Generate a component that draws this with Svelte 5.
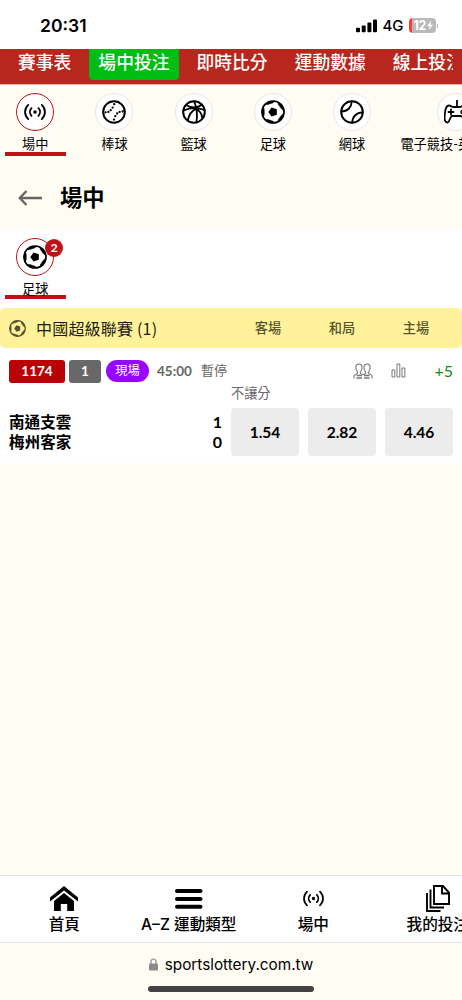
<script lang="ts">
  const navItems = ['賽事表', '場中投注', '即時比分', '運動數據', '線上投注'];

  const sports = [
    { icon: 'live', label: '場中' },
    { icon: 'baseball', label: '棒球' },
    { icon: 'basketball', label: '籃球' },
    { icon: 'soccer', label: '足球' },
    { icon: 'tennis', label: '網球' },
    { icon: 'esports', label: '電子競技-英雄聯盟' },
  ];

  const teams = [
    { name: '南通支雲', score: 1 },
    { name: '梅州客家', score: 0 },
  ];

  const columns = ['客場', '和局', '主場'];
  const odds = ['1.54', '2.82', '4.46'];

  const tabs = [
    { icon: 'home', label: '首頁' },
    { icon: 'menu', label: 'A–Z 運動類型' },
    { icon: 'live', label: '場中' },
    { icon: 'docs', label: '我的投注' },
  ];

  // baseball seams
  const stitches = [
    [3.6, 12.3], [6.4, 11.9], [8.7, 10.2], [10.6, 7.6], [12.2, 4.2],
    [20.6, 11.5], [17.6, 11.9], [15.2, 13.5], [13.3, 16.2], [12, 19.6],
  ];
</script>

{#snippet sportIcon(name: string)}
  <svg class="sport-svg" viewBox="0 0 24 24" fill="none" stroke="currentColor" stroke-width="2" stroke-linecap="round">
    {#if name === 'live'}
      <circle cx="12" cy="12" r="1.9" fill="currentColor" stroke="none"/>
      <path d="M8.2 7.8a6.2 6.2 0 0 0 0 8.4M15.8 7.8a6.2 6.2 0 0 1 0 8.4M4.6 4.200c-4.600 4.400-4.600 11.200 0 15.600M19.400 4.200c4.600 4.400 4.600 11.200 0 15.600" stroke-width="2"/>
    {:else if name === 'baseball'}
      <circle cx="12" cy="12" r="10.8"/>
      {#each stitches as [x, y]}
        <circle cx={x} cy={y} r="1.15" fill="currentColor" stroke="none"/>
      {/each}
    {:else if name === 'basketball'}
      <circle cx="12" cy="12" r="10.8"/>
      <path d="M12 1.2c2.7 6 3.7 13.5 2.4 21.2M1.5 10.5C8 7.8 15 7.3 22.5 10M4 5c5 3 11.5 3.5 16-.5M5.8 20.5C7 14 10 10.5 14 8.8M14 8.8c4 2.2 6 5.5 6.3 9.2" stroke-width="1.8"/>
    {:else if name === 'soccer'}
      <circle cx="12" cy="12" r="11" stroke-width="1.7"/>
      <path d="M7.300 12l3.300-4.500 5.200 1.700v5.600l-5.200 1.700z" fill="currentColor" stroke="none"/>
      {#each [0, 72, 144, 216, 288] as angle}
        <path d="M2.2 7.2l1 2v5.600l-1 2Q0 12 2.200 7.200z" transform="rotate({angle} 12 12)" fill="currentColor" stroke-width=".6"/>
      {/each}
    {:else if name === 'tennis'}
      <circle cx="12" cy="12" r="10.8"/>
      <path d="M1.5 11.5C7.5 11.5 11.5 7.5 11.8 1.5M12.2 22.5C12.5 16.5 16.5 12.500 22.500 12.500" stroke-width="1.8"/>
    {:else}
      <path d="M13 5.500V.5M5 5.500c2 0 2.500 1.500 4.500 1.500h6c2 0 2.500-1.500 4.500-1.500 2.500 0 3.500 2.500 4 7 .7 6 1 9.500-1.200 10-2.500.6-3.300-5.500-5.800-6.500H8c-2.500 1-2.300 7.100-4.800 6.500C0 22 .3 18.500 1 12.500c.5-4.500 1.500-7 4-7zM4.500 12h5M7 9.500v5" stroke-width="1.8"/>
      <circle cx="18.5" cy="12" r="1.6" stroke-width="1.4"/>
    {/if}
  </svg>
{/snippet}

<div class="screen">
  <header class="status">
    <span class="clock">20:31</span>
    <div class="status-right">
      <svg width="22" height="14" viewBox="0 0 22 14">
        <rect x="0" y="8.7" width="4" height="4.5" rx="1"/>
        <rect x="5.7" y="6.5" width="4" height="6.7" rx="1"/>
        <rect x="11.4" y="3.5" width="4" height="9.7" rx="1"/>
        <rect x="17" y="0.5" width="4" height="12.7" rx="1"/>
      </svg>
      <span class="network">4G</span>
      <span class="battery">
        12<svg width="6" height="11" viewBox="0 0 7 11"><path d="M5 0L0 6.2h3L2 11l5-6.4H4z" fill="#fff"/></svg>
      </span>
      <span class="battery-tip"></span>
    </div>
  </header>

  <nav class="topnav">
    <div class="topnav-list">
      {#each navItems as item, i}
        <span class="topnav-item" class:active={i === 1}>{item}</span>
      {/each}
    </div>
  </nav>

  <div class="sports">
    {#each sports as sport, i}
      <div class="sport" class:active={i === 0}>
        <span class="circle">{@render sportIcon(sport.icon)}</span>
        <span class="sport-label">{sport.label}</span>
      </div>
    {/each}
  </div>

  <div class="title">
    <svg width="25" height="18" viewBox="0 0 25 18" fill="none" stroke="#666" stroke-width="2.4">
      <path d="M24 9H2M8.5 2L1.8 9l6.700 7"/>
    </svg>
    <h1>場中</h1>
  </div>

  <main>
    <div class="sports filter">
      <div class="sport active">
        <span class="circle">
          {@render sportIcon('soccer')}
          <span class="badge">2</span>
        </span>
        <span class="sport-label">足球</span>
      </div>
    </div>

    <div class="league">
      <span class="league-icon">{@render sportIcon('soccer')}</span>
      <span class="league-name">中國超級聯賽 (1)</span>
      <div class="cols">
        {#each columns as col}
          <span>{col}</span>
        {/each}
      </div>
    </div>

    <div class="match">
      <div class="meta">
        <span class="tag code">1174</span>
        <span class="tag count">1</span>
        <span class="live-pill">現場</span>
        <span class="time">45:00</span>
        <span class="state">暫停</span>
        <svg class="people" width="20" height="16" viewBox="0 0 20 16" fill="none" stroke="#777" stroke-width="1.1">
          <path d="M1 15.500v-2.800c0-1 1.500-1.300 3-2 .8-.4.700-1.200.2-2C3 7 2.700 5.500 2.900 3.800 3.100 2 4.200 1 5.900 1s2.900 1 3.100 2.800c.2 1.700-.1 3.200-1.300 4.900-.5.800-.6 1.600.2 2l2.100 1 2.100-1c.8-.4.700-1.200.2-2C11.100 7 10.800 5.500 11 3.800 11.200 2 12.300 1 14 1s2.900 1 3.100 2.800c.2 1.700-.1 3.200-1.300 4.900-.5.800-.6 1.600.2 2 1.500.7 3 1 3 2v2.800"/>
          <path d="M3.5 12.500H9M3.500 15H9M11 12.500h5.500M11 15h5.500" stroke-width="1.3"/>
        </svg>
        <svg class="stats" width="15" height="15" viewBox="0 0 15 15" fill="none" stroke="#777">
          <path d="M1 7h2.800v7H1zM6 1h2.800v13H6zM11 5h2.800v9H11z"/>
        </svg>
        <span class="more">+5</span>
      </div>

      <div class="market">不讓分</div>

      <div class="row">
        <div class="teams">
          {#each teams as team}
            <div class="team"><span>{team.name}</span><span class="score">{team.score}</span></div>
          {/each}
        </div>
        {#each odds as odd}
          <button class="odd">{odd}</button>
        {/each}
      </div>
    </div>
  </main>

  <footer class="tabbar">
    {#each tabs as tab}
      <div class="tab">
        <span class="tab-icon">
          {#if tab.icon === 'home'}
            <svg width="28" height="26" viewBox="0 0 28 26">
              <path d="M0 11.500L14 0l14 11.500v4L14 4.500 0 15.500z"/>
              <path d="M4 15L14 7l10 8v10h-6.800v-7h-6.400v7H4z"/>
            </svg>
          {:else if tab.icon === 'menu'}
            <svg width="28" height="20" viewBox="0 0 28 20">
              <rect width="27.5" height="4" rx="2"/>
              <rect y="7.9" width="27.5" height="4" rx="2"/>
              <rect y="15.8" width="27.5" height="4" rx="2"/>
            </svg>
          {:else if tab.icon === 'live'}
            <span class="tab-live">{@render sportIcon('live')}</span>
          {:else}
            <svg width="24" height="27" viewBox="0 0 24 27" fill="none" stroke="#000" stroke-width="1.9">
              <path d="M8 1h9l6 6.500V19H8zM16 1v7.500h7M4.500 4.500V22.500H18M1 8v18h13.500"/>
            </svg>
          {/if}
        </span>
        <span class="tab-label">{tab.label}</span>
      </div>
    {/each}
  </footer>

  <div class="browser">
    <div class="url">
      <svg width="9" height="13" viewBox="0 0 9 13">
        <path d="M2 6V3.500a2.500 2.500 0 0 1 5 0V6" fill="none" stroke="#8a8a8a" stroke-width="1.2"/>
        <rect y="5.5" width="9" height="7" rx="1.2" fill="#8a8a8a"/>
      </svg>
      <span>sportslottery.com.tw</span>
    </div>
    <div class="home-bar"></div>
  </div>
</div>

<style>
  :global(body) {
    background: #fffdf3;
  }

  .screen {
    display: flex;
    flex-direction: column;
    height: 1000px;
    width: 100%;
    overflow: hidden;
    font-family: Lato, 'Noto Sans CJK TC', sans-serif;
    color: #000;
    white-space: nowrap;
  }
  .screen * {
    box-sizing: border-box;
  }
  svg {
    display: block;
    flex: none;
  }

  /* ---- phone status bar ---- */
  .status {
    display: flex;
    justify-content: space-between;
    align-items: center;
    flex: none;
    height: 49px;
    padding: 2px 24px 0 40px;
    background: #fff;
    font-family: Inter, sans-serif;
  }
  .clock {
    font-size: 17.5px;
    font-weight: 600;
  }
  .status-right {
    display: flex;
    align-items: center;
  }
  .network {
    margin-left: 5px;
    width: 26px;
    font-size: 15px;
    font-weight: 500;
  }
  .battery {
    display: flex;
    align-items: center;
    justify-content: center;
    gap: 0.5px;
    width: 27px;
    height: 15px;
    padding-left: 2px;
    border-radius: 4px;
    background: linear-gradient(90deg, #ff3b30 3.5px, #b9b9b9 3.5px);
    color: #fff;
    font-size: 12.5px;
    font-weight: 700;
    letter-spacing: -0.3px;
  }
  .battery-tip {
    width: 1.5px;
    height: 4px;
    margin-left: 1px;
    background: #bbb;
  }

  /* ---- red navigation ---- */
  .topnav {
    flex: none;
    height: 36px;
    padding: 0 9px;
    background: #b7271d;
    border-bottom: 1px solid #e9b0a8;
  }
  .topnav-list {
    display: flex;
    gap: 9px;
    overflow: hidden;
  }
  .topnav-item {
    flex: none;
    height: 31px;
    padding: 0 9px;
    border-radius: 0 0 4px 4px;
    color: #fff;
    font-size: 17.8px;
    font-weight: 500;
    line-height: 27px;
  }
  .topnav-item.active {
    background: #00bd13;
  }

  /* ---- sport pickers ---- */
  .sports {
    display: flex;
    flex: none;
    gap: 17.7px;
    height: 79px;
    padding: 8px 0 8px 4.5px;
    overflow: hidden;
  }
  .sport {
    display: flex;
    flex-direction: column;
    align-items: center;
    flex: none;
    min-width: 61.5px;
    height: 63px;
    border-bottom: 4px solid transparent;
  }
  .sport.active {
    border-bottom-color: #c01216;
  }
  .circle {
    position: relative;
    display: flex;
    align-items: center;
    justify-content: center;
    width: 38px;
    height: 38px;
    flex: none;
    border: 1.5px solid #e6e6e8;
    border-radius: 50%;
    background: #fff;
  }
  .active .circle {
    border-color: #c01216;
  }
  .sport-svg {
    width: 24px;
    height: 24px;
  }
  .sport:first-child:not(:only-child) .sport-svg {
    width: 22px;
    height: 22px;
  }
  .sport-label {
    margin-top: 3px;
    font-size: 13.2px;
    line-height: 20px;
  }
  .badge {
    position: absolute;
    top: 0;
    right: -10px;
    width: 18px;
    height: 18px;
    border-radius: 50%;
    background: #c01216;
    color: #fff;
    font-size: 12px;
    font-weight: 700;
    line-height: 18px;
    text-align: center;
  }

  .title {
    display: flex;
    align-items: center;
    flex: none;
    gap: 17px;
    height: 65px;
    padding: 2px 0 0 18px;
  }
  .title h1 {
    margin: 0;
    font-size: 22.3px;
    font-weight: 700;
    line-height: 30px;
  }

  /* ---- events ---- */
  main {
    flex: none;
    height: 234px;
    background: #fff;
  }
  .filter {
    height: 79px;
    padding-top: 9px;
  }
  .filter .sport {
    height: 61px;
  }

  .league {
    display: flex;
    align-items: center;
    height: 40px;
    padding: 0 9px;
    border-radius: 5px;
    background: #fff29a;
  }
  .league-icon {
    margin-right: 10px;
    color: #55512f;
  }
  .league-icon .sport-svg {
    width: 17px;
    height: 17px;
  }
  .league-name {
    font-size: 16px;
    font-family: 'Noto Sans CJK TC', sans-serif;
    line-height: 24px;
    letter-spacing: 0.2px;
    color: #1e1d12;
  }
  .cols {
    display: flex;
    margin-left: auto;
  }
  .cols span {
    width: 74px;
    margin-top: -2px;
    text-align: center;
    color: #59552f;
    font-size: 13.2px;
    font-weight: 500;
  }

  .match {
    padding: 10px 9px 0;
  }
  .meta {
    display: flex;
    align-items: center;
    height: 25px;
    color: #666;
  }
  .tag {
    height: 23px;
    margin-top: 2px;
    border-radius: 3px;
    color: #fff;
    font-size: 13.5px;
    font-weight: 700;
    line-height: 23px;
    text-align: center;
  }
  .code {
    width: 56px;
    background: #b90005;
  }
  .count {
    width: 32px;
    margin-left: 4px;
    background: #686868;
  }
  .live-pill {
    width: 43px;
    height: 22px;
    margin-left: 5px;
    border-radius: 11px;
    background: #9707ff;
    color: #fff;
    font-size: 12.3px;
    line-height: 21px;
    text-align: center;
  }
  .time {
    margin-left: 8px;
    width: 44px;
    font-size: 13.5px;
    font-weight: 700;
  }
  .state {
    margin-top: -2px;
    font-size: 13px;
  }
  .people {
    margin-left: auto;
  }
  .stats {
    margin-left: 18px;
  }
  .more {
    width: 47px;
    text-align: right;
    color: #168a16;
    font-size: 16px;
  }
  .market {
    padding-left: 222px;
    height: 25px;
    color: #666;
    font-size: 13.2px;
    line-height: 20px;
  }
  .row {
    display: flex;
    gap: 9px;
  }
  .teams {
    width: 213px;
    padding-top: 4px;
    font-size: 15.6px;
    font-weight: 700;
    line-height: 20px;
  }
  .team {
    display: flex;
    justify-content: space-between;
  }
  .score {
    font-size: 16px;
  }
  .odd {
    width: 68px;
    height: 48px;
    padding: 0;
    border: 0;
    border-radius: 4px;
    background: #ececec;
    color: #000;
    font: 700 15.5px Lato, sans-serif;
  }

  /* ---- bottom tabs ---- */
  .tabbar {
    display: flex;
    flex: none;
    height: 68px;
    margin-top: auto;
    border-top: 1px solid #e4e4e2;
    border-bottom: 1.5px solid #e2e2e0;
    background: #fff;
  }
  .tab {
    display: flex;
    flex-direction: column;
    align-items: center;
    flex: none;
    width: 124.5px;
  }
  .tab:first-child {
    margin-left: 2px;
  }
  .tab-icon {
    display: flex;
    align-items: center;
    height: 36px;
    padding-top: 9px;
  }
  .tab-live .sport-svg {
    width: 21px;
    height: 21px;
  }
  .tab-label {
    margin-top: 1px;
    font-family: Inter, 'Noto Sans CJK TC', sans-serif;
    font-size: 15.6px;
    font-weight: 500;
    line-height: 24px;
  }

  /* ---- address bar ---- */
  .browser {
    display: flex;
    flex-direction: column;
    align-items: center;
    flex: none;
    height: 57px;
    padding-top: 10px;
    font: 15.3px Inter, sans-serif;
  }
  .url {
    display: flex;
    align-items: center;
    gap: 7px;
    height: 22px;
  }
  .home-bar {
    width: 166px;
    height: 5.5px;
    margin-top: 11px;
    border-radius: 3px;
    background: #424242;
  }
</style>
